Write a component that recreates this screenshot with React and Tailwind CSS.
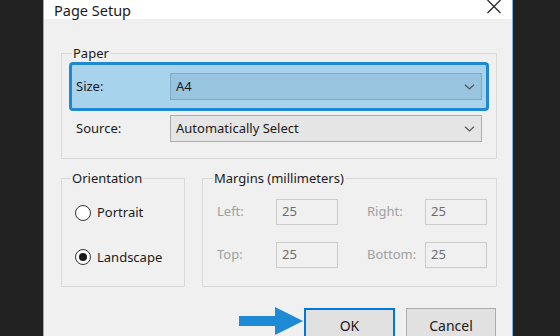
import React from 'react';

function Chevron() {
    return (
        <svg width="11" height="6" viewBox="0 0 11 6" className="text-[#555555]">
            <path d="M1 0.8 L5.5 5 L10 0.8" fill="none" stroke="currentColor" strokeWidth="1.2" />
        </svg>
    );
}

function Select({ value, highlighted }) {
    return (
        <div className={`w-[312px] h-[27px] flex items-center justify-between pl-[5px] pr-[6px] border ${highlighted ? 'bg-[#98c4e0] border-[#7eaac6]' : 'bg-[#e5e5e5] border-[#adadad]'}`}>
            <span>{value}</span>
            <Chevron />
        </div>
    );
}

function Radio({ label, checked }) {
    return (
        <div className="flex items-center gap-[6px]">
            <div className="w-[16px] h-[16px] rounded-full border border-[#333] bg-white flex items-center justify-center">
                {checked && <div className="w-[8px] h-[8px] rounded-full bg-[#1a1a1a]" />}
            </div>
            <span>{label}</span>
        </div>
    );
}

function MarginInput({ value }) {
    return (
        <div className="w-[62px] h-[26px] border border-[#cccccc] bg-[#f0f0f0] flex items-center pl-[5px] text-[#6d6d6d]">
            {value}
        </div>
    );
}

export default function App() {
    return (
        <div className="w-[560px] h-[336px] bg-[#222222] flex overflow-hidden text-[13px] text-[#1a1a1a]" style={{ fontFamily: '"Noto Sans", "Open Sans", sans-serif' }}>
            <div className="w-[43px] shrink-0" />
            <div className="w-[470px] shrink-0 flex flex-col border-x border-[#7fb0dc] bg-[#f0f0f0]">
                {/* title bar */}
                <div className="h-[27px] bg-white flex items-start justify-between pl-[10px] pr-[10px]">
                    <span className="text-[14.5px] leading-[18px] mt-[1px]">Page Setup</span>
                    <svg width="16" height="14" viewBox="0 0 16 14">
                        <path d="M1.5 0 L14.5 13 M14.5 0 L1.5 13" stroke="#222" strokeWidth="1.2" />
                    </svg>
                </div>

                <div className="flex flex-col pl-[17px] pr-[15px] pt-[25px]">
                    {/* Paper */}
                    <fieldset className="border border-[#d9d9d9] px-[7px] pb-[16px]">
                        <legend className="ml-[3px] px-[1px] leading-[18px]">Paper</legend>
                        <div className="h-[49px] rounded-[4px] border-[3px] border-[#1e88d2] bg-[#a7d3ed] flex items-center justify-between pl-[4px] pr-[4px]">
                            <span>Size:</span>
                            <Select value="A4" highlighted />
                        </div>
                        <div className="mt-[4px] flex items-center justify-between px-[7px]">
                            <span>Source:</span>
                            <Select value="Automatically Select" />
                        </div>
                    </fieldset>

                    <div className="flex gap-[17px] mt-[10px]">
                        {/* Orientation */}
                        <fieldset className="w-[124px] h-[118px] border border-[#d9d9d9] pl-[13px]">
                            <legend className="ml-[-4px] px-[1px] leading-[18px]">Orientation</legend>
                            <div className="flex flex-col gap-[25px] mt-[16px]">
                                <Radio label="Portrait" />
                                <Radio label="Landscape" checked />
                            </div>
                        </fieldset>

                        {/* Margins */}
                        <fieldset className="flex-1 h-[118px] border border-[#d9d9d9] pl-[14px]">
                            <legend className="ml-[-4px] px-[1px] leading-[18px]">Margins (millimeters)</legend>
                            <div className="grid grid-cols-[59px_62px_29px_58px_62px] gap-y-[17px] mt-[12px] items-center text-[#a0a0a0]">
                                <span>Left:</span>
                                <MarginInput value="25" />
                                <span />
                                <span>Right:</span>
                                <MarginInput value="25" />
                                <span>Top:</span>
                                <MarginInput value="25" />
                                <span />
                                <span>Bottom:</span>
                                <MarginInput value="25" />
                            </div>
                        </fieldset>
                    </div>

                    {/* buttons */}
                    <div className="flex justify-end items-start mt-[21px] pr-[1px]">
                        <svg width="66" height="30" viewBox="0 0 66 30" className="-mt-[1px] mr-[-1px]">
                            <path d="M0 9 H36 V0 L64 14 L36 28 V19 H0 Z" fill="#1e8ad6" />
                        </svg>
                        <div className="w-[91px] h-[34px] border-2 border-[#0078d7] bg-[#e1e1e1] flex items-center justify-center text-[14px]">OK</div>
                        <div className="w-[90px] h-[34px] ml-[11px] border border-[#adadad] bg-[#e1e1e1] flex items-center justify-center text-[14px]">Cancel</div>
                    </div>
                </div>
            </div>
            <div className="flex-1" />
        </div>
    );
}
